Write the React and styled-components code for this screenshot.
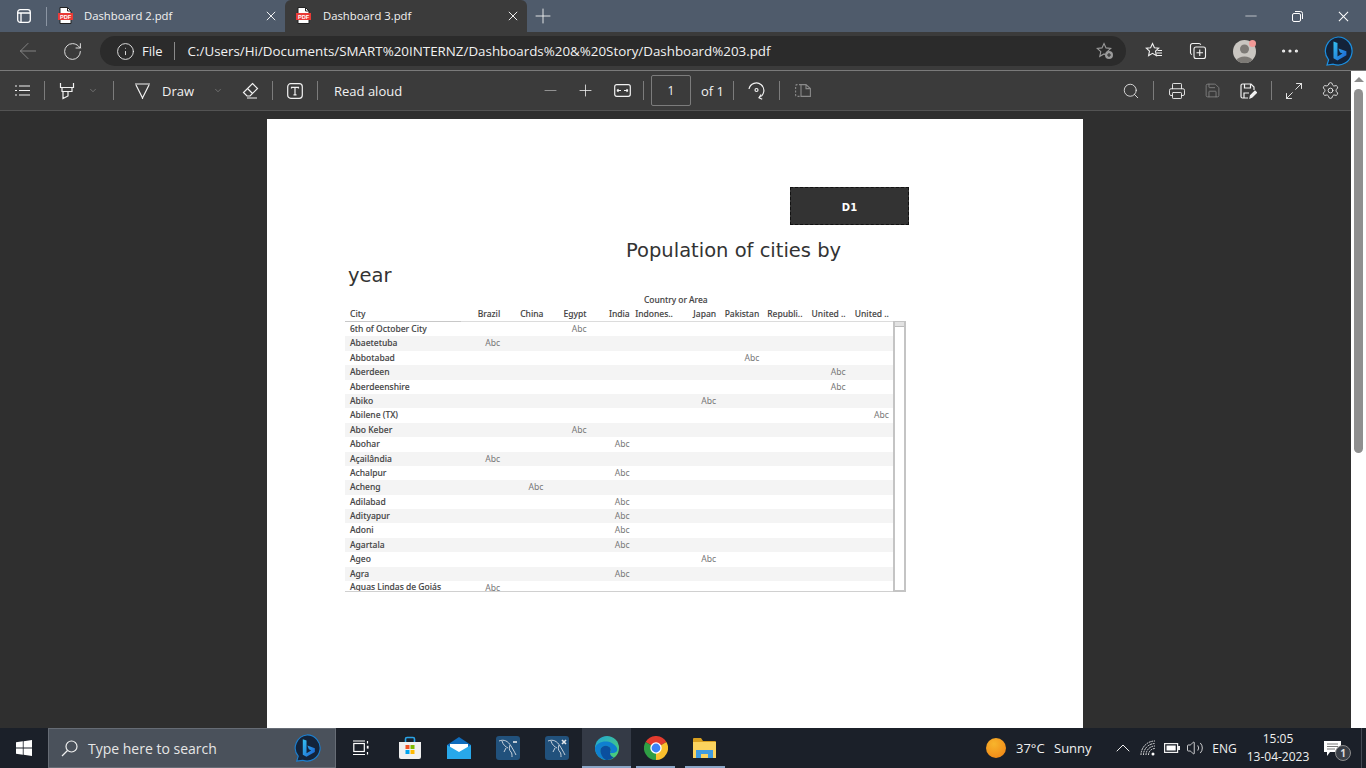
import React from 'react';
import styled, { createGlobalStyle } from 'styled-components';
import {
  Plus, Minus, ArrowLeft, RotateCw, Info, Search, Printer, Save, Maximize2,
  Settings, ChevronDown, ChevronUp, Volume2, MoreHorizontal
} from 'lucide-react';

const GlobalStyle = createGlobalStyle`
  html, body { margin: 0; padding: 0; height: 100%; overflow: hidden; background: #2f2f2f; }
  * { box-sizing: border-box; }
`;

const UI_FONT = `"Open Sans", "Noto Sans", "Liberation Sans", sans-serif`;
const TABLE_FONT = `"Noto Sans", "Open Sans", sans-serif`;

/* ================= SHELL ================= */

const Shell = styled.div`
  width: 1366px;
  height: 768px;
  display: flex;
  flex-direction: column;
  overflow: hidden;
  font-family: ${UI_FONT};
  color: #f2f2f2;
`;

const TabStrip = styled.div`
  height: 32px;
  flex: none;
  display: flex;
  background: #4f5b6b;
`;

const WindowIcon = styled.div`
  width: 47px;
  display: flex;
  align-items: center;
  justify-content: center;
  position: relative;
  &::after {
    content: '';
    position: absolute;
    right: 0;
    top: 7px;
    bottom: 6px;
    width: 1px;
    background: #8b95a3;
  }
`;

const Tab = styled.div`
  width: ${({ $w }) => $w}px;
  height: 32px;
  display: flex;
  align-items: center;
  padding: 0 9px 1px 11px;
  font-size: 11.3px;
  border-radius: 6px 6px 0 0;
  background: ${({ $active }) => ($active ? '#3b3b3b' : 'transparent')};
  color: #f2f2f2;
`;

const TabTitle = styled.span`
  flex: 1;
  margin-left: ${({ $ml }) => $ml}px;
`;

const NewTab = styled.div`
  width: 32px;
  display: flex;
  align-items: center;
  justify-content: center;
`;

const WindowButtons = styled.div`
  margin-left: auto;
  display: flex;
`;

const WindowButton = styled.div`
  width: 46px;
  height: 32px;
  display: flex;
  align-items: center;
  justify-content: center;
`;

const AddressBar = styled.div`
  height: 39px;
  flex: none;
  display: flex;
  align-items: center;
  background: #3b3b3b;
  border-bottom: 1px solid #7a7a7a;
  padding: 1px 0;
`;

const NavButton = styled.div`
  width: ${({ $w }) => $w}px;
  flex: none;
  display: flex;
  align-items: center;
  justify-content: center;
`;

const UrlPill = styled.div`
  width: 1026px;
  height: 30px;
  flex: none;
  display: flex;
  align-items: center;
  border-radius: 15px;
  background: #2b2b2b;
  padding: 0 12px 0 16px;
  font-size: 13px;
`;

const FileLabel = styled.span`
  margin-left: 7px;
`;

const PillDivider = styled.span`
  width: 1px;
  height: 18px;
  background: #8a8a8a;
  margin: 0 13px 0 11px;
`;

const Url = styled.span`
  flex: 1;
  white-space: nowrap;
  font-size: 13.37px;
`;

/* ================= PDF AREA ================= */

const Workspace = styled.div`
  flex: 1;
  min-height: 0;
  display: flex;
`;

const PdfColumn = styled.div`
  flex: 1;
  min-width: 0;
  display: flex;
  flex-direction: column;
`;

const PdfToolbar = styled.div`
  height: 40px;
  flex: none;
  display: flex;
  align-items: center;
  background: #3b3b3b;
  border-bottom: 1px solid #535353;
  font-size: 13px;
`;

const Slot = styled.div`
  width: ${({ $w }) => $w}px;
  height: 100%;
  flex: none;
  display: flex;
  align-items: center;
  justify-content: center;
  padding-left: ${({ $pl }) => $pl || 0}px;
  opacity: ${({ $dim }) => ($dim ? 0.4 : 1)};
`;

const Sep = styled.span`
  width: 1px;
  height: 19px;
  flex: none;
  background: #7c7c7c;
`;

const ToolLabel = styled.span`
  width: ${({ $w }) => $w}px;
  flex: none;
  white-space: nowrap;
`;

const PageBox = styled.div`
  width: 40px;
  height: 31px;
  flex: none;
  display: flex;
  align-items: center;
  justify-content: center;
  border: 1px solid #7c7c7c;
  border-radius: 2px;
  font-size: 12px;
`;

const Viewport = styled.div`
  flex: 1;
  min-height: 0;
  overflow: hidden;
  background: #2f2f2f;
  padding: 8px 0 0 267px;
`;

const PdfPage = styled.div`
  width: 816px;
  height: 640px;
  background: #fff;
  padding: 68px 0 0 78px;
  color: #333;
`;

const BadgeBox = styled.div`
  width: 119px;
  height: 38px;
  margin-left: 445px;
  padding-top: 2px;
  display: flex;
  align-items: center;
  justify-content: center;
  background: #333;
  border: 1px dashed #111;
  color: #fff;
  font: bold 10px "DejaVu Sans", sans-serif;
`;

const ReportTitle = styled.h1`
  width: 520px;
  margin: 13px 0 0 3px;
  font: 400 19.5px/25px "DejaVu Sans", sans-serif;
  text-indent: 278px;
  color: #333;
`;

const AxisCaption = styled.div`
  height: 14px;
  margin-top: 5px;
  padding-left: 299px;
  font: 500 8.4px/14px ${TABLE_FONT};
  -webkit-text-stroke: 0.1px #444;
  color: #444;
`;

const TableWrap = styled.div`
  display: flex;
  align-items: flex-end;
`;

const TableBody = styled.div`
  width: 548px;
  flex: none;
`;

const Grid = styled.div`
  display: grid;
  grid-template-columns: 116px repeat(10, 43.2px);
  font-family: ${TABLE_FONT};
  font-size: 8.5px;
  white-space: nowrap;
`;

const HeadRow = styled(Grid)`
  height: 15px;
  line-height: 14px;
  border-bottom: 1px solid #dcdcdc;
  font-weight: 500;
  -webkit-text-stroke: 0.1px #444;
  color: #444;
`;

const CityHead = styled.div`
  padding-left: 5px;
  margin-bottom: -1px;
  border-bottom: 1px solid #c8c8c8;
`;

const ColHead = styled.div`
  padding-right: 4px;
  text-align: right;
`;

const Rows = styled.div`
  height: 270px;
  overflow: hidden;
  border-bottom: 1px solid #d0d0d0;
`;

const Row = styled(Grid)`
  height: 14.4px;
  line-height: 14.4px;
  background: ${({ $band }) => ($band ? '#f4f4f4' : '#fff')};
`;

const CityCell = styled.div`
  padding-left: 5px;
  font-weight: 500;
  -webkit-text-stroke: 0.1px #444;
  color: #444;
  transform: translateY(${({ $lift }) => ($lift ? -1 : 0)}px);
`;

const AbcCell = styled.div`
  grid-column: ${({ $col }) => $col + 2};
  padding-right: 4px;
  text-align: right;
  font-size: 8.6px;
  color: #777;
`;

const MiniScroll = styled.div`
  width: 13px;
  height: 271px;
  flex: none;
  border: 2px solid #c4c4c4;
  border-top-width: 1px;
  background: #fff;
  &::before {
    content: '';
    display: block;
    height: 4px;
    background: #e2e2e2;
    border-bottom: 1px solid #bbb;
  }
`;

const PageScrollbar = styled.div`
  width: 15px;
  flex: none;
  background: #fff;
  display: flex;
  flex-direction: column;
  align-items: center;
  padding-top: 6px;
`;

const ScrollArrow = styled.div`
  width: 0;
  height: 0;
  border-left: 5px solid transparent;
  border-right: 5px solid transparent;
  border-bottom: 5px solid #8c8c8c;
`;

const ScrollThumb = styled.div`
  width: 9px;
  height: 364px;
  margin-top: 7px;
  border-radius: 5px;
  background: #8f8f8f;
`;

/* ================= TASKBAR ================= */

const Taskbar = styled.div`
  height: 40px;
  flex: none;
  display: flex;
  align-items: center;
  background: #1b2029;
  color: #f0f0f0;
  font-size: 13px;
`;

const StartButton = styled.div`
  width: 48px;
  flex: none;
  display: flex;
  justify-content: center;
`;

const SearchBox = styled.div`
  width: 288px;
  height: 40px;
  flex: none;
  display: flex;
  align-items: center;
  padding: 0 14px 0 12px;
  background: #4a515b;
  border: 1px solid #666c75;
  font-size: 14px;
  color: #e6e6e6;
`;

const SearchText = styled.span`
  flex: 1;
  margin-left: 10px;
`;

const TaskSlot = styled.div`
  width: 49.2px;
  height: 40px;
  flex: none;
  position: relative;
  display: flex;
  align-items: center;
  justify-content: center;
  background: ${({ $active }) => ($active ? '#343a46' : 'transparent')};
  &::after {
    content: '';
    display: ${({ $open }) => ($open ? 'block' : 'none')};
    position: absolute;
    bottom: 0;
    height: 2px;
    left: ${({ $active }) => ($active ? 0 : 5)}px;
    right: ${({ $active }) => ($active ? 0 : 5)}px;
    background: #8ba6c7;
  }
`;

const Tray = styled.div`
  margin-left: auto;
  width: 380px;
  height: 40px;
  flex: none;
  display: flex;
  align-items: center;
`;

const SunDot = styled.span`
  width: 20px;
  height: 20px;
  flex: none;
  margin-right: 10px;
  border-radius: 50%;
  background: radial-gradient(circle at 40% 30%, #f7b52c, #f07f12);
`;

const TrayText = styled.span`
  width: ${({ $w }) => $w}px;
  flex: none;
  white-space: nowrap;
  text-align: ${({ $center }) => ($center ? 'center' : 'left')};
  font-size: ${({ $size }) => $size || 13}px;
`;

const Clock = styled.div`
  width: 70px;
  flex: none;
  text-align: center;
  font-size: 12px;
  line-height: 18px;
`;

const TrayEdge = styled.span`
  width: 1px;
  height: 40px;
  margin-left: 10px;
  flex: none;
  background: #444a54;
`;

const NotifyWrap = styled.div`
  width: 38px;
  height: 40px;
  flex: none;
  position: relative;
  display: flex;
  align-items: center;
  justify-content: center;
`;

const NotifyCount = styled.span`
  position: absolute;
  left: 22px;
  top: 17px;
  width: 16px;
  height: 16px;
  border-radius: 50%;
  display: flex;
  align-items: center;
  justify-content: center;
  background: #3a3f47;
  border: 1px solid #8c8c8c;
  font-size: 10px;
  font-weight: 700;
  color: #ddd;
`;

const AvatarWrap = styled.div`
  position: relative;
  width: 23px;
  height: 23px;
`;

const AvatarDot = styled.span`
  position: absolute;
  right: 0;
  top: 0;
  width: 7px;
  height: 7px;
  border-radius: 50%;
  background: #f29a97;
`;

/* ================= ICONS ================= */

const PdfIcon = () => (
  <svg width="15" height="17" viewBox="0 0 15 17">
    <path d="M2 .5h7.500L13 4v12.500H2z" fill="#fff" stroke="#222" />
    <path d="M9.500.5V4H13" fill="none" stroke="#222" />
    <rect x="0" y="6" width="15" height="7" fill="#e93a36" />
    <text x="7.500" y="11.800" textAnchor="middle" fontSize="5.600" fontWeight="700" fontFamily="Liberation Sans, sans-serif" fill="#fff">PDF</text>
  </svg>
);

const TabsIcon = () => (
  <svg width="16" height="16" viewBox="0 0 16 16" fill="none" stroke="#fff" strokeWidth="1.300">
    <rect x="1.700" y="1.700" width="12.600" height="12.600" rx="2.500" />
    <path d="M1.700 5h12.600M5 5v9.300" />
  </svg>
);

const RestoreIcon = () => (
  <svg width="11" height="11" viewBox="0 0 11 11" fill="none" stroke="#fff">
    <rect x=".5" y="2.500" width="8" height="8" rx="1.500" />
    <path d="M3 .5h5.500a2 2 0 0 1 2 2V8" />
  </svg>
);

const ThinX = ({ size = 13 }) => (
  <svg width={size} height={size} viewBox="0 0 12 12" stroke="#fff" strokeWidth="1.100">
    <path d="M1 1l10 10M11 1L1 11" />
  </svg>
);

const BingLogo = ({ size = 30, ring = '#1b8fe0' }) => (
  <svg width={size} height={size} viewBox="0 0 30 30">
    <defs>
      <linearGradient id="bingB" x1="0" y1="0" x2="1" y2="1">
        <stop offset="0" stopColor="#35c1f1" />
        <stop offset="1" stopColor="#1a5fd0" />
      </linearGradient>
    </defs>
    <path d="M15 1a14 14 0 1 1-4.600 27.200L4 29l1.600-5.200A14 14 0 0 1 15 1z" fill="#13233a" stroke={ring} strokeWidth="1.200" />
    <path d="M10.500 5.500l4 1.400v13.600l5-2.900-2.500-1.200-1.600-4 8 2.800v4.100l-9 5.200-3.900-2.200z" fill="url(#bingB)" />
  </svg>
);

const StarPlus = () => (
  <svg width="18" height="18" viewBox="0 0 18 18" fill="none" stroke="#9a9a9a" strokeWidth="1.100">
    <path d="M8 1.500l2 4.400 4.700.5-3.500 3.200 1 4.700L8 11.900l-4.200 2.400 1-4.700L1.300 6.400 6 5.900z" />
    <circle cx="13" cy="13" r="4" fill="#9a9a9a" stroke="none" />
    <path d="M13 11v4M11 13h4" stroke="#2b2b2b" />
  </svg>
);

const FavoritesIcon = () => (
  <svg width="18" height="18" viewBox="0 0 18 18" fill="none" stroke="#f2f2f2" strokeWidth="1.100">
    <path d="M7.500 1.500l1.900 4.200 4.300.5-3.200 3 .9 4.400-3.900-2.300-3.900 2.300.9-4.400-3.200-3 4.300-.5z" />
    <path d="M12.500 8.500h4.500M11.500 11h5.500M11.500 13.500h5.500" />
  </svg>
);

const CollectionsIcon = () => (
  <svg width="18" height="18" viewBox="0 0 18 18" fill="none" stroke="#f2f2f2" strokeWidth="1.100">
    <path d="M3 12.500A2 2 0 0 1 1.500 11V3.500a2 2 0 0 1 2-2H10a2 2 0 0 1 1.800 1.200" />
    <rect x="5" y="5" width="11.500" height="11.500" rx="2" />
    <path d="M10.750 7.500v6.500M7.500 10.750H14" />
  </svg>
);

const Avatar = () => (
  <AvatarWrap>
    <svg width="23" height="23" viewBox="0 0 23 23">
      <circle cx="11.500" cy="11.500" r="11.500" fill="#c9c6c1" />
      <circle cx="11.500" cy="9" r="4.500" fill="#7d7a76" />
      <path d="M3.500 20a9 6.500 0 0 1 16 0 11.500 11.500 0 0 1-16 0z" fill="#7d7a76" />
    </svg>
    <AvatarDot />
  </AvatarWrap>
);

const ListIcon = () => (
  <svg width="17" height="13" viewBox="0 0 17 13" stroke="#f2f2f2" strokeWidth="1.200">
    <path d="M5 2h11M5 6.500h11M5 11h11M1 2h2M1 6.500h2M1 11h2" />
  </svg>
);

const HighlighterIcon = () => (
  <svg width="16" height="18" viewBox="0 0 16 18" fill="none" stroke="#f2f2f2" strokeWidth="1.200">
    <path d="M1.500 1v4.500h13V1M3 5.500v4h10v-4M4 9.500v7l5-2.500V9.500" />
  </svg>
);

const DrawIcon = () => (
  <svg width="17" height="18" viewBox="0 0 17 18" fill="none" stroke="#f2f2f2" strokeWidth="1.200">
    <path d="M1 2h15M2 3l6.500 13L15 3M8.500 16v1" />
  </svg>
);

const EraserIcon = () => (
  <svg width="17" height="17" viewBox="0 0 17 17" fill="none" stroke="#f2f2f2" strokeWidth="1.200">
    <path d="M10.500 1.500l5 5-7.500 7.500H5l-3.500-3.500zM5.500 6.500l5 5M5 16h10" />
  </svg>
);

const TextBoxIcon = () => (
  <svg width="16" height="16" viewBox="0 0 16 16" fill="none" stroke="#f2f2f2" strokeWidth="1.200">
    <rect x=".7" y=".7" width="14.600" height="14.600" rx="3" />
    <path d="M4.500 5.500v-1.200h7v1.200M8 4.300v7.500M6.500 11.800h3" />
  </svg>
);

const FitWidthIcon = () => (
  <svg width="17" height="13" viewBox="0 0 17 13" fill="none" stroke="#f2f2f2" strokeWidth="1.200">
    <rect x=".7" y=".7" width="15.600" height="11.600" rx="2" />
    <path d="M3 6.500h4M3 6.500l1.500-1.300M3 6.500l1.500 1.300M14 6.500h-4M14 6.500l-1.500-1.300M14 6.500l-1.500 1.300" />
  </svg>
);

const RotateIcon = () => (
  <svg width="17" height="18" viewBox="0 0 17 18" fill="none" stroke="#f2f2f2" strokeWidth="1.200">
    <path d="M1 7a7.500 7.500 0 1 1 10 8.500" />
    <path d="M13 12.500l-2 3.200 3.200 1.500" />
    <circle cx="8.500" cy="8" r="1.500" />
  </svg>
);

const PageViewIcon = () => (
  <svg width="16" height="13" viewBox="0 0 16 13" fill="none" stroke="#8a8a8a" strokeWidth="1.100">
    <path d="M6 .6H2A1.400 1.400 0 0 0 .6 2v9A1.400 1.400 0 0 0 2 12.400h4" strokeDasharray="2 1.500" />
    <path d="M6 .6h5l4.400 4v7.800H6zM11 .6v4h4.400" />
  </svg>
);

const SaveAsIcon = () => (
  <svg width="17" height="16" viewBox="0 0 17 16" fill="none" stroke="#f2f2f2" strokeWidth="1.200">
    <path d="M8 15H2.500A1.500 1.500 0 0 1 1 13.500v-11A1.500 1.500 0 0 1 2.500 1H11l3 3v3" />
    <path d="M4.500 1v4h6V1M4 15v-5h5" />
    <path d="M10 15l.5-2.500 4.500-4.500 1.600 1.600-4.500 4.500z" fill="#f2f2f2" />
  </svg>
);

const WindowsLogo = () => (
  <svg width="16" height="16" viewBox="0 0 16 16" fill="#fff">
    <path d="M0 2.300l6.800-1v6.300H0zM7.600 1.200L16 0v7.600H7.600zM0 8.400h6.800v6.300l-6.800-1zM7.600 8.400H16V16l-8.400-1.200z" />
  </svg>
);

const GlassIcon = () => (
  <svg width="17" height="17" viewBox="0 0 17 17" fill="none" stroke="#f0f0f0" strokeWidth="1.200">
    <circle cx="10.500" cy="6.500" r="5.500" />
    <path d="M6.500 10.500L1 16" />
  </svg>
);

const TaskViewIcon = () => (
  <svg width="16" height="16" viewBox="0 0 16 16" fill="none" stroke="#fff" strokeWidth="1.200">
    <rect x=".8" y="3.500" width="10.500" height="8" />
    <path d="M0 1h12M0 14.500h12M14.500 1v2.500M14.500 12v2.500" />
    <rect x="13.800" y="5.800" width="1.800" height="2.800" fill="#fff" stroke="none" />
  </svg>
);

const StoreIcon = () => (
  <svg width="24" height="24" viewBox="0 0 24 24">
    <path d="M7.500 6V3a1.500 1.500 0 0 1 1.500-1.500h6A1.500 1.500 0 0 1 16.500 3v3" fill="none" stroke="#2aa3e6" strokeWidth="1.600" />
    <path d="M1 6h22v15a2 2 0 0 1-2 2H3a2 2 0 0 1-2-2z" fill="#f0f0f0" />
    <rect x="7.500" y="9" width="4" height="4" fill="#f25022" />
    <rect x="12.500" y="9" width="4" height="4" fill="#7fba00" />
    <rect x="7.500" y="14" width="4" height="4" fill="#00a4ef" />
    <rect x="12.500" y="14" width="4" height="4" fill="#ffb900" />
  </svg>
);

const MailIcon = () => (
  <svg width="24" height="22" viewBox="0 0 24 22">
    <path d="M0 8l12-8 12 8v14H0z" fill="#0f6cbd" />
    <path d="M3 7h18v7l-9 5-9-5z" fill="#fff" />
    <path d="M0 8l12 7 12-7v14H0z" fill="#28a8ea" />
  </svg>
);

const WorkbenchIcon = ({ mark }) => (
  <svg width="24" height="24" viewBox="0 0 24 24" fill="none">
    <rect width="24" height="24" rx="3" fill="#21517c" />
    <path d="M3 5c5-2 9 0 12 5 1.500 2.500 3 5 5 9M6 5c1 4 4 6 6 7M14 9c-1 3-1 5 1 7 1 1 1 3 1 5M10 12l-2 4" stroke="#c8d2dc" strokeWidth="1" />
    <path d={mark === 'minus' ? 'M17 6h4' : 'M17 4l4 4M21 4l-4 4'} stroke="#e4e8ec" strokeWidth="1.600" />
  </svg>
);

const EdgeIcon = () => (
  <svg width="24" height="24" viewBox="0 0 24 24">
    <defs>
      <linearGradient id="edgeTop" x1="0" y1="0" x2="1" y2="1">
        <stop offset="0" stopColor="#1fa5d8" />
        <stop offset="1" stopColor="#52d468" />
      </linearGradient>
    </defs>
    <circle cx="12" cy="12" r="12" fill="url(#edgeTop)" />
    <path d="M0 12C2 5 16 2 22 12c1 3-1 5-5 5h-3c3-1 3-6-2-7-5-1-8 3-6 8 1 3 4 5 6 6C6 24 0 19 0 12z" fill="#0f7fd0" />
    <path d="M6 18c-2-5 1-9 6-8 3 .6 4.500 3 3.500 5C14 19 17 21 19 21c-3 3-6 3-8 3-2-1-4-3-5-6z" fill="#0b4f9e" />
  </svg>
);

const ChromeIcon = () => (
  <svg width="24" height="24" viewBox="0 0 24 24">
    <path d="M12 12L1.600 6A12 12 0 0 1 22.400 6z" fill="#e33b2e" />
    <path d="M12 12l10.400-6A12 12 0 0 1 12 24z" fill="#fbc02d" />
    <path d="M12 12v12A12 12 0 0 1 1.600 6z" fill="#2f9e44" />
    <circle cx="12" cy="12" r="5.700" fill="#fff" />
    <circle cx="12" cy="12" r="4.400" fill="#3b82f6" />
  </svg>
);

const FolderIcon = () => (
  <svg width="23" height="20" viewBox="0 0 23 20">
    <path d="M0 1a1 1 0 0 1 1-1h7l2 3h12a1 1 0 0 1 1 1v3H0z" fill="#d9a020" />
    <rect y="4" width="23" height="16" fill="#fbd35e" />
    <path d="M3 20v-8h17v8h-5v-4H8v4z" fill="#3f9be0" />
  </svg>
);

const WifiIcon = () => (
  <svg width="16" height="16" viewBox="0 0 16 16" fill="none" stroke="#e8e8e8" strokeWidth="1">
    <path d="M1 15A14 14 0 0 1 15 1M3.500 15A11.500 11.500 0 0 1 15 3.500M6 15a9 9 0 0 1 9-9M8.500 15A6.500 6.500 0 0 1 15 8.500" strokeDasharray="1.800 .8" />
    <circle cx="13" cy="14" r="1.500" fill="#fff" stroke="none" />
  </svg>
);

const BatteryIcon = () => (
  <svg width="16" height="10" viewBox="0 0 16 10">
    <rect x=".6" y=".6" width="13" height="8.800" fill="none" stroke="#f0f0f0" strokeWidth="1.200" />
    <rect x="2.500" y="2.500" width="9.200" height="5" fill="#fff" />
    <rect x="14" y="3" width="2" height="4" fill="#f0f0f0" />
  </svg>
);

const NotifyIcon = () => (
  <svg width="17" height="17" viewBox="0 0 17 17">
    <path d="M0 1h17v11H6l-3 4v-4H0z" fill="#fff" />
    <path d="M3 4h11M3 6.500h11M3 9h8" stroke="#555" strokeWidth=".8" />
  </svg>
);

/* ================= DATA ================= */

const columns = ['Brazil', 'China', 'Egypt', 'India', 'Indones..', 'Japan', 'Pakistan', 'Republi..', 'United ..', 'United ..'];

const cities = [
  ['6th of October City', 2], ['Abaetetuba', 0], ['Abbotabad', 6], ['Aberdeen', 8],
  ['Aberdeenshire', 8], ['Abiko', 5], ['Abilene (TX)', 9], ['Abo Keber', 2],
  ['Abohar', 3], ['Açailândia', 0], ['Achalpur', 3], ['Acheng', 1],
  ['Adilabad', 3], ['Adityapur', 3], ['Adoni', 3], ['Agartala', 3],
  ['Ageo', 5], ['Agra', 3], ['Aguas Lindas de Goiás', 0]
];

/* ================= APP ================= */

export default function App() {
  return (
    <Shell>
      <GlobalStyle />

      {/* TABS */}
      <TabStrip>
        <WindowIcon><TabsIcon /></WindowIcon>
        <Tab $w={238}>
          <PdfIcon />
          <TabTitle $ml={11}>Dashboard 2.pdf</TabTitle>
          <ThinX size={10} />
        </Tab>
        <Tab $w={242} $active>
          <PdfIcon />
          <TabTitle $ml={12}>Dashboard 3.pdf</TabTitle>
          <ThinX size={10} />
        </Tab>
        <NewTab><Plus size={24} strokeWidth={0.9} /></NewTab>
        <WindowButtons>
          <WindowButton><Minus size={18} strokeWidth={0.9} /></WindowButton>
          <WindowButton><RestoreIcon /></WindowButton>
          <WindowButton><ThinX size={11} /></WindowButton>
        </WindowButtons>
      </TabStrip>

      {/* ADDRESS BAR */}
      <AddressBar>
        <NavButton $w={56}><ArrowLeft size={26} strokeWidth={0.8} color="#8f8f8f" /></NavButton>
        <NavButton $w={32}><RotateCw size={21} strokeWidth={1} /></NavButton>
        <NavButton $w={12} />
        <UrlPill>
          <Info size={19} strokeWidth={1.1} />
          <FileLabel>File</FileLabel>
          <PillDivider />
          <Url>C:/Users/Hi/Documents/SMART%20INTERNZ/Dashboards%20&amp;%20Story/Dashboard%203.pdf</Url>
          <StarPlus />
        </UrlPill>
        <NavButton $w={6} />
        <NavButton $w={44}><FavoritesIcon /></NavButton>
        <NavButton $w={44}><CollectionsIcon /></NavButton>
        <NavButton $w={48}><Avatar /></NavButton>
        <NavButton $w={44}><MoreHorizontal size={22} strokeWidth={1.5} /></NavButton>
        <NavButton $w={52}><BingLogo /></NavButton>
      </AddressBar>

      <Workspace>
        <PdfColumn>

          {/* PDF TOOLBAR */}
          <PdfToolbar>
            <Slot $w={44}><ListIcon /></Slot>
            <Sep />
            <Slot $w={43}><HighlighterIcon /></Slot>
            <Slot $w={10}><ChevronDown size={15} strokeWidth={1} color="#b5b5b5" /></Slot>
            <Slot $w={15} />
            <Sep />
            <Slot $w={48} $pl={8}><DrawIcon /></Slot>
            <ToolLabel $w={51}>Draw</ToolLabel>
            <Slot $w={10}><ChevronDown size={15} strokeWidth={1} color="#b5b5b5" /></Slot>
            <Slot $w={15} />
            <Slot $w={24}><EraserIcon /></Slot>
            <Slot $w={10} />
            <Sep />
            <Slot $w={44}><TextBoxIcon /></Slot>
            <Sep />
            <Slot $w={16} />
            <ToolLabel $w={206}>Read aloud</ToolLabel>
            <Slot $w={20}><Minus size={19} strokeWidth={1} color="#aaa" /></Slot>
            <Slot $w={15} />
            <Slot $w={20}><Plus size={19} strokeWidth={1} /></Slot>
            <Slot $w={17} />
            <Slot $w={20}><FitWidthIcon /></Slot>
            <Slot $w={11} />
            <Sep />
            <Slot $w={7} />
            <PageBox>1</PageBox>
            <Slot $w={10} />
            <ToolLabel $w={32}>of 1</ToolLabel>
            <Sep />
            <Slot $w={45}><RotateIcon /></Slot>
            <Sep />
            <Slot $w={45}><PageViewIcon /></Slot>
            <Slot $w={284} />
            <Slot $w={44}><Search size={18} strokeWidth={1.1} /></Slot>
            <Sep />
            <Slot $w={45}><Printer size={18} strokeWidth={1.2} /></Slot>
            <Slot $w={27} $dim><Save size={17} strokeWidth={1.2} /></Slot>
            <Slot $w={45}><SaveAsIcon /></Slot>
            <Sep />
            <Slot $w={44}><Maximize2 size={20} strokeWidth={1.1} /></Slot>
            <Slot $w={28}><Settings size={19} strokeWidth={1.1} /></Slot>
          </PdfToolbar>

          {/* PDF PAGE */}
          <Viewport>
            <PdfPage>
              <BadgeBox>D1</BadgeBox>
              <ReportTitle>Population of cities by year</ReportTitle>
              <AxisCaption>Country or Area</AxisCaption>
              <TableWrap>
                <TableBody>
                  <HeadRow>
                    <CityHead>City</CityHead>
                    {columns.map((c, i) => <ColHead key={i}>{c}</ColHead>)}
                  </HeadRow>
                  <Rows>
                    {cities.map(([city, col], i) => (
                      <Row key={city} $band={i % 2 === 1}>
                        <CityCell $lift={i === cities.length - 1}>{city}</CityCell>
                        <AbcCell $col={col}>Abc</AbcCell>
                      </Row>
                    ))}
                  </Rows>
                </TableBody>
                <MiniScroll />
              </TableWrap>
            </PdfPage>
          </Viewport>
        </PdfColumn>

        <PageScrollbar>
          <ScrollArrow />
          <ScrollThumb />
        </PageScrollbar>
      </Workspace>

      {/* TASKBAR */}
      <Taskbar>
        <StartButton><WindowsLogo /></StartButton>
        <SearchBox>
          <GlassIcon />
          <SearchText>Type here to search</SearchText>
          <BingLogo size={28} ring="#1b7fd0" />
        </SearchBox>
        <TaskSlot><TaskViewIcon /></TaskSlot>
        <TaskSlot><StoreIcon /></TaskSlot>
        <TaskSlot><MailIcon /></TaskSlot>
        <TaskSlot><WorkbenchIcon mark="minus" /></TaskSlot>
        <TaskSlot><WorkbenchIcon mark="cross" /></TaskSlot>
        <TaskSlot $active $open><EdgeIcon /></TaskSlot>
        <TaskSlot $open><ChromeIcon /></TaskSlot>
        <TaskSlot $open><FolderIcon /></TaskSlot>
        <Tray>
          <SunDot />
          <TrayText $w={38}>37°C</TrayText>
          <TrayText $w={56}>Sunny</TrayText>
          <NavButton $w={25}><ChevronUp size={24} strokeWidth={1} /></NavButton>
          <NavButton $w={25}><WifiIcon /></NavButton>
          <NavButton $w={24}><BatteryIcon /></NavButton>
          <NavButton $w={22}><Volume2 size={18} strokeWidth={1.1} /></NavButton>
          <TrayText $w={37} $center $size={12}>ENG</TrayText>
          <Clock>15:05<br />13-04-2023</Clock>
          <NotifyWrap>
            <NotifyIcon />
            <NotifyCount>1</NotifyCount>
          </NotifyWrap>
          <TrayEdge />
        </Tray>
      </Taskbar>
    </Shell>
  );
}
